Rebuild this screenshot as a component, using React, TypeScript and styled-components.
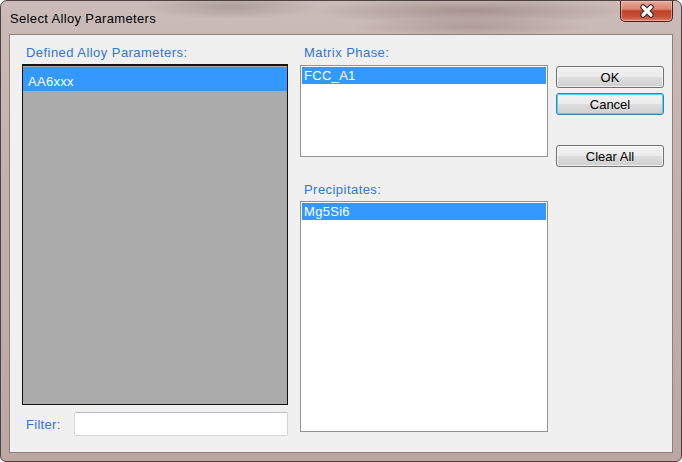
import styled, { createGlobalStyle } from "styled-components";

const GlobalStyle = createGlobalStyle`
  html, body {
    margin: 0;
    padding: 0;
    background: #ffffff;
  }
  body {
    font-family: "Liberation Sans", Arial, sans-serif;
  }
`;

const Window = styled.div`
  width: 682px;
  height: 462px;
  box-sizing: border-box;
  display: flex;
  flex-direction: column;
  padding: 0 8px 8px 8px;
  border: 1px solid #4f4341;
  border-radius: 7px 7px 6px 6px;
  background:
    radial-gradient(ellipse 160px 14px at 470px 10px, rgba(120, 96, 90, 0.45), transparent),
    radial-gradient(ellipse 120px 10px at 470px 26px, rgba(120, 96, 90, 0.35), transparent),
    radial-gradient(ellipse 90px 12px at 230px 6px, rgba(110, 90, 86, 0.3), transparent),
    linear-gradient(180deg, #cbbcb9 0%, #c3b0ac 40%, #bda7a3 100%);
  overflow: hidden;
`;

const TitleBar = styled.div`
  height: 33px;
  display: flex;
  align-items: flex-start;
  flex-shrink: 0;
`;

const Title = styled.div`
  padding: 10px 0 0 1px;
  font-size: 13px;
  line-height: 15px;
  letter-spacing: 0.35px;
  color: #000;
`;

const CloseButton = styled.div`
  margin-left: auto;
  width: 53px;
  height: 21px;
  box-sizing: border-box;
  border: 1px solid #4a2019;
  border-top: none;
  border-radius: 0 0 5px 5px;
  background: linear-gradient(
    180deg,
    #e9a999 0%,
    #dc8470 40%,
    #c2412a 50%,
    #c9523a 80%,
    #d8826c 100%
  );
  box-shadow: inset 0 0 0 1px rgba(255, 220, 210, 0.45);
  display: flex;
  align-items: center;
  justify-content: center;
`;

const Client = styled.div`
  flex: 1;
  display: flex;
  padding: 10px 8px 16px 12px;
  border: 1px solid #8e807e;
  background: #f0f0f0;
  font-size: 13px;
`;

const Column = styled.div<{ $width: number; $gapRight: number }>`
  width: ${(p) => p.$width}px;
  margin-right: ${(p) => p.$gapRight}px;
  display: flex;
  flex-direction: column;
`;

const Label = styled.div<{ $below?: number; $above?: number }>`
  padding-left: 4px;
  margin-top: ${(p) => p.$above ?? 0}px;
  margin-bottom: ${(p) => p.$below ?? 4}px;
  color: #3275d6;
  line-height: 15px;
  letter-spacing: 0.45px;
  white-space: nowrap;
`;

const DarkList = styled.div`
  flex: 1;
  border: 1px solid #111;
  border-top-width: 2px;
  background: #ababab;
  padding-top: 1px;
`;

const List = styled.div<{ $height: number }>`
  height: ${(p) => p.$height}px;
  box-sizing: border-box;
  border: 1px solid #8f9398;
  background: #fff;
  padding: 1px;
`;

const Item = styled.div<{ $tall?: boolean }>`
  height: ${(p) => (p.$tall ? 25 : 17)}px;
  box-sizing: border-box;
  padding-left: ${(p) => (p.$tall ? 5 : 2)}px;
  padding-top: ${(p) => (p.$tall ? 4 : 0)}px;
  display: flex;
  align-items: center;
  background: #3399ff;
  border-bottom: 1px solid ${(p) => (p.$tall ? "#7fb3e6" : "#3399ff")};
  color: #fff;
  letter-spacing: 0.3px;
`;

const FilterRow = styled.div`
  margin-top: 7px;
  height: 24px;
  display: flex;
  align-items: center;
`;

const FilterLabel = styled.div`
  width: 52px;
  padding-left: 4px;
  box-sizing: border-box;
  color: #3275d6;
  letter-spacing: 0.3px;
`;

const TextBox = styled.div`
  flex: 1;
  height: 24px;
  box-sizing: border-box;
  border: 1px solid #d2d4d8;
  border-top-color: #b8bbc2;
  border-radius: 2px;
  background: #fff;
`;

const ButtonCol = styled.div`
  width: 108px;
  padding-top: 21px;
  display: flex;
  flex-direction: column;
`;

const Button = styled.div<{ $focused?: boolean; $above?: number }>`
  height: 22px;
  margin-top: ${(p) => p.$above ?? 0}px;
  box-sizing: border-box;
  border: 1px solid ${(p) => (p.$focused ? "#3c7fb1" : "#707070")};
  border-radius: 3px;
  background: linear-gradient(
    180deg,
    #f2f2f2 0%,
    #ebebeb 48%,
    #dddddd 52%,
    #cfcfcf 100%
  );
  box-shadow: inset 0 0 0 1px
    ${(p) => (p.$focused ? "#48d8fb" : "rgba(255,255,255,0.7)")};
  display: flex;
  align-items: center;
  justify-content: center;
  color: #000;
  font-size: 13px;
`;

const CloseGlyph = () => (
  <svg width="16" height="14" viewBox="0 0 16 14">
    <path
      d="M4 3 L12 11 M12 3 L4 11"
      stroke="#3a2a28"
      strokeWidth="5.5"
      strokeLinecap="round"
      fill="none"
    />
    <path
      d="M4 3 L12 11 M12 3 L4 11"
      stroke="#ffffff"
      strokeWidth="3.2"
      strokeLinecap="round"
      fill="none"
    />
  </svg>
);

export default function App() {
  return (
    <>
      <GlobalStyle />
      <Window>
        <TitleBar>
          <Title>Select Alloy Parameters</Title>
          <CloseButton>
            <CloseGlyph />
          </CloseButton>
        </TitleBar>
        <Client>
          <Column $width={266} $gapRight={12}>
            <Label $below={4}>Defined Alloy Parameters:</Label>
            <DarkList>
              <Item $tall>AA6xxx</Item>
            </DarkList>
            <FilterRow>
              <FilterLabel>Filter:</FilterLabel>
              <TextBox />
            </FilterRow>
          </Column>
          <Column $width={248} $gapRight={8}>
            <Label $below={5}>Matrix Phase:</Label>
            <List $height={92}>
              <Item>FCC_A1</Item>
            </List>
            <Label $above={25} $below={4}>
              Precipitates:
            </Label>
            <List $height={231}>
              <Item>Mg5Si6</Item>
            </List>
          </Column>
          <ButtonCol>
            <Button>OK</Button>
            <Button $focused $above={5}>
              Cancel
            </Button>
            <Button $above={30}>Clear All</Button>
          </ButtonCol>
        </Client>
      </Window>
    </>
  );
}
